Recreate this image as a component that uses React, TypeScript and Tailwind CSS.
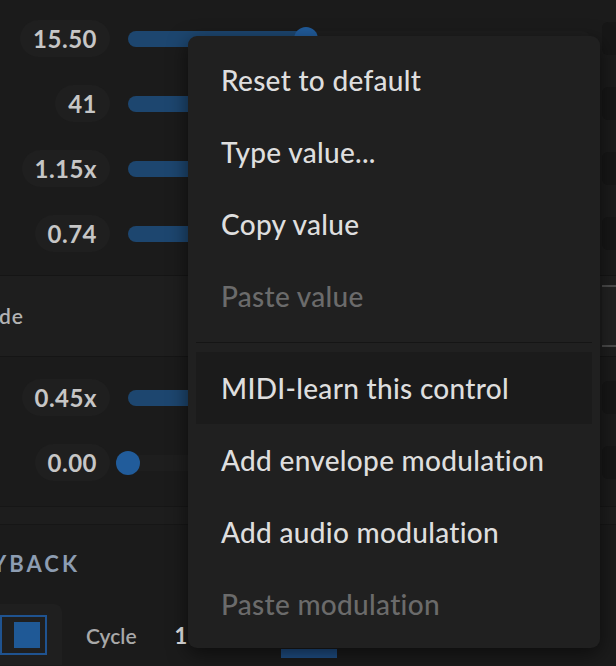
import React from "react";

type SliderRow = { label: string; fill: number };

const topRows: SliderRow[] = [
  { label: "15.50", fill: 178 },
  { label: "41", fill: 320 },
  { label: "1.15x", fill: 280 },
  { label: "0.74", fill: 300 },
];

const lowerRows: SliderRow[] = [
  { label: "0.45x", fill: 260 },
  { label: "0.00", fill: 0 },
];

function ValueSlider({ label, fill }: SliderRow) {
  return (
    <div className="flex h-[65px] items-center">
      <div className="flex w-[110px] justify-end">
        <div className="flex h-[37px] items-center rounded-full bg-[#1f1f1f] px-[13px] text-[24px] font-bold tracking-[0.5px] text-[#c6c6c6]">
          {label}
        </div>
      </div>
      <div className="relative ml-[18px] mr-[12px] h-[16px] flex-1 rounded-full bg-[#1e1e1e]">
        <div
          className="h-full rounded-l-full bg-[#1d466f]"
          style={{ width: fill }}
        />
        <div
          className="absolute top-[-4px] h-[24px] w-[24px] rounded-full bg-[#215c9b]"
          style={{ left: fill - 12 }}
        />
      </div>
      <div className="h-[33px] w-[14px] rounded-l-[6px] bg-[#171717]" />
    </div>
  );
}

const menuItems: { text: string; disabled?: boolean; active?: boolean; sep?: boolean }[] = [
  { text: "Reset to default" },
  { text: "Type value..." },
  { text: "Copy value" },
  { text: "Paste value", disabled: true },
  { text: "", sep: true },
  { text: "MIDI-learn this control", active: true },
  { text: "Add envelope modulation" },
  { text: "Add audio modulation" },
  { text: "Paste modulation", disabled: true },
];

export default function App() {
  return (
    <div
      className="relative h-[666px] w-[616px] overflow-hidden bg-[#1b1b1b]"
      style={{ fontFamily: "Lato, 'Open Sans', sans-serif" }}
    >
      {/* parameter sliders */}
      <div className="pb-[9px] pt-[6px]">
        {topRows.map((r) => (
          <ValueSlider key={r.label} {...r} />
        ))}
      </div>

      {/* mode selector row */}
      <div className="flex h-[82px] items-center border-y border-[#151515] bg-[#1e1e1e]">
        <div className="flex w-[24px] justify-end whitespace-nowrap text-[21px] font-semibold tracking-[1px] text-[#b3b3b3]">
          Mode
        </div>
        <div className="ml-auto h-[62px] w-[14px] border-y-2 border-[#4b4b4b] bg-[#222222]" />
      </div>

      <div className="pb-[11px] pt-[8px]">
        {lowerRows.map((r) => (
          <ValueSlider key={r.label} {...r} />
        ))}
      </div>

      <div className="h-[19px] border-y border-[#161616] bg-[#1d1d1d]" />

      {/* playback section */}
      <div className="flex w-[80px] justify-end whitespace-nowrap pt-[25px] text-[22px] font-bold leading-[28px] tracking-[3px] text-[#8d9db2]">
        PLAYBACK
      </div>

      <div className="mt-[26px] flex h-[61px]">
        <div className="w-[62px] rounded-tr-[8px] bg-[#1f1f1f] pt-[11px]">
          <div className="flex h-[40px] w-[47px] items-center justify-end border-2 border-[#1f5390] pr-[5px]">
            <div className="h-[26px] w-[26px] bg-[#1f5996]" />
          </div>
        </div>
        <div className="ml-[24px] mt-[16px] text-[21px] font-semibold text-[#a9a9a9]">Cycle</div>
        <div className="ml-[38px] mt-[15px] text-[22px] font-bold text-[#e4e4e4]">1</div>
        <div className="ml-[94px] mt-[45px] h-[9px] w-[56px] bg-[#1f4f86]" />
      </div>

      {/* context menu */}
      <div className="absolute left-[188px] top-[36px] w-[412px] rounded-[9px] bg-[#202020] p-[8px] shadow-[0_6px_20px_rgba(0,0,0,0.55)]">
        {menuItems.map((item, i) =>
          item.sep ? (
            <div key={i} className="flex h-[20px] items-center">
              <div className="h-px w-full bg-[#151515]" />
            </div>
          ) : (
            <div
              key={i}
              className={
                "flex h-[72px] items-center whitespace-nowrap px-[25px] text-[28px] font-medium tracking-[0.3px] " +
                (item.disabled ? "text-[#6b6b6b] " : "text-[#dedede] ") +
                (item.active ? "bg-[#1b1b1b]" : "")
              }
            >
              {item.text}
            </div>
          )
        )}
      </div>
    </div>
  );
}
